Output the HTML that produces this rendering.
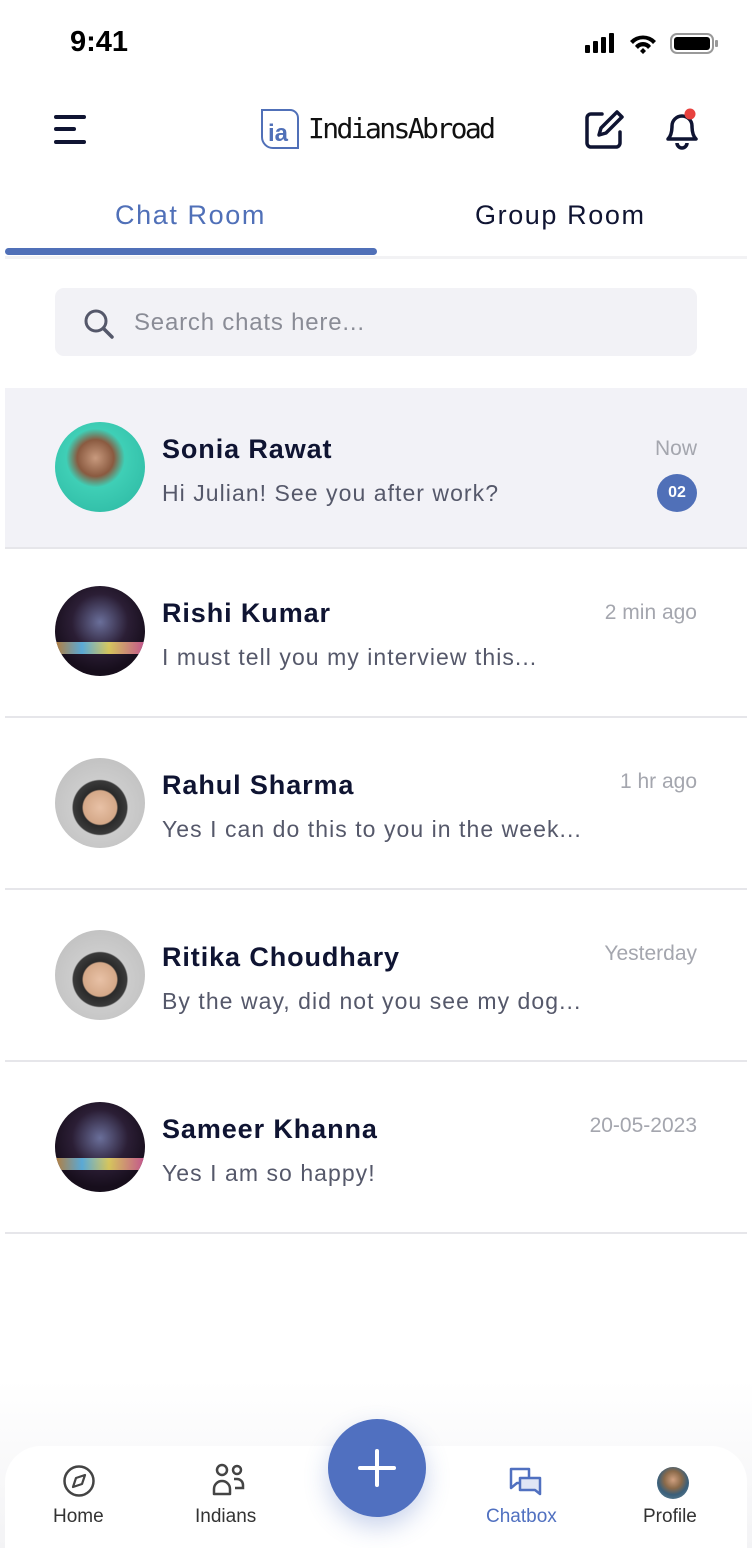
<!DOCTYPE html><html><head><meta charset="utf-8"><style>
*{margin:0;padding:0;box-sizing:border-box}
body{width:752px;height:1548px;background:#fff;font-family:"Liberation Sans",sans-serif;position:relative;overflow:hidden;color:#0f1432}
.a{position:absolute}
.row{position:absolute;left:5px;width:742px;border-bottom:2px solid #e6e6ea}
.av{position:absolute;left:50px;width:90px;height:90px;border-radius:50%;overflow:hidden}
.nm{position:absolute;left:157px;font-size:27px;font-weight:bold;color:#0f1432;letter-spacing:.9px}
.ms{position:absolute;left:157px;font-size:23px;color:#55586a;letter-spacing:1.05px}
.tm{position:absolute;right:50px;font-size:21px;color:#a4a6ae}
.city{background:radial-gradient(circle at 50% 40%,#6a6f9a 0,#2b1e35 40%,#170e1c 70%);}
.city:after{content:"";position:absolute;left:0;right:0;top:62%;height:14%;background:linear-gradient(90deg,#d94 0,#6cf 30%,#fe6 60%,#e6a 100%);opacity:.8}
.boy{background:radial-gradient(circle at 50% 55%,#e8c1a6 0,#d4a888 25%,#2a2a2a 27%,#3a3a3a 40%,#ccc 42%,#bbb 100%)}
.girl{background:radial-gradient(circle at 45% 40%,#c89a7e 0,#8a5a40 25%,#3fcfb6 40%,#2ab5a0 100%)}
</style></head><body>
<div class="a" style="left:70px;top:26px;font-size:29px;font-weight:bold;color:#000">9:41</div>
<svg class="a" style="left:585px;top:31px" width="135" height="26" viewBox="0 0 135 26"><rect x="0" y="14" width="5" height="8" rx="1"/><rect x="8" y="10" width="5" height="12" rx="1"/><rect x="16" y="6" width="5" height="16" rx="1"/><rect x="24" y="2" width="5" height="20" rx="1"/><path d="M45 10a18 18 0 0 1 26 0l-3 3a13 13 0 0 0-20 0zM50 15a10 10 0 0 1 16 0l-3 3a6 6 0 0 0-10 0zM55 20l3-3 3 3-3 3z"/><rect x="86" y="3" width="42" height="19" rx="6" fill="none" stroke="#000" stroke-width="2" opacity=".4"/><rect x="89" y="6" width="36" height="13" rx="3"/><rect x="130" y="9" width="3" height="7" rx="1" opacity=".4"/></svg>
<svg class="a" style="left:54px;top:114px" width="34" height="32"><g stroke="#0f1432" stroke-width="4" stroke-linecap="round"><line x1="2" y1="3" x2="30" y2="3"/><line x1="2" y1="15" x2="20" y2="15"/><line x1="2" y1="28" x2="30" y2="28"/></g></svg>
<svg class="a" style="left:259px;top:108px" width="42" height="42"><path d="M3 2h28a8 8 0 0 1 8 8v30H14A11 11 0 0 1 3 29z" fill="none" stroke="#5070b8" stroke-width="2"/><text x="9" y="33" font-size="24" font-weight="bold" fill="#5070b8" font-family="Liberation Sans">ia</text></svg>
<div class="a" style="left:308px;top:112px;font-size:28px;font-family:'DejaVu Sans Mono','Liberation Mono',monospace;letter-spacing:-2.6px;color:#111">IndiansAbroad</div>
<svg class="a" style="left:584px;top:108px" width="42" height="42"><path d="M18 6H7a4 4 0 0 0-4 4v25a4 4 0 0 0 4 4h25a4 4 0 0 0 4-4V24" fill="none" stroke="#0f1432" stroke-width="3.5" stroke-linecap="round"/><path d="M33 4l5 5-16 16-7 2 2-7z" fill="none" stroke="#0f1432" stroke-width="3.5" stroke-linejoin="round"/></svg>
<svg class="a" style="left:660px;top:106px" width="44" height="44"><path d="M8 33c3-3 4-7 4-13a10 10 0 0 1 20 0c0 6 1 10 4 13z" fill="none" stroke="#0f1432" stroke-width="3.5" stroke-linejoin="round"/><path d="M17 37a5 5 0 0 0 10 0" fill="none" stroke="#0f1432" stroke-width="3.5"/><circle cx="30" cy="8" r="5.5" fill="#e8423f"/></svg>
<div class="a" style="left:115px;top:200px;font-size:27px;color:#5070b8;letter-spacing:1.6px">Chat Room</div>
<div class="a" style="left:475px;top:200px;font-size:27px;color:#0f1432;letter-spacing:1.6px">Group Room</div>
<div class="a" style="left:5px;top:256px;width:742px;height:3px;background:#f2f2f4"></div>
<div class="a" style="left:5px;top:248px;width:372px;height:7px;border-radius:4px;background:#5070b8"></div>
<div class="a" style="left:55px;top:288px;width:642px;height:68px;border-radius:9px;background:#f2f2f6"></div>
<svg class="a" style="left:83px;top:308px" width="32" height="32"><circle cx="13" cy="13" r="10" fill="none" stroke="#55586a" stroke-width="3"/><line x1="21" y1="21" x2="29" y2="29" stroke="#55586a" stroke-width="3.5" stroke-linecap="round"/></svg>
<div class="a" style="left:134px;top:309px;font-size:24px;color:#8a8c96;letter-spacing:.8px">Search chats here...</div>

<div class="row" style="top:388px;height:161px;background:#f2f2f7"><div class="av girl" style="top:34px"></div><div class="nm" style="top:46px">Sonia Rawat</div><div class="ms" style="top:92px">Hi Julian! See you after work?</div><div class="tm" style="top:49px">Now</div><div class="a" style="left:652px;top:86px;width:40px;height:38px;border-radius:50%;background:#5070b8;color:#fff;font-size:16px;font-weight:bold;text-align:center;line-height:38px">02</div></div>
<div class="row" style="top:549px;height:169px"><div class="av city" style="top:37px"></div><div class="nm" style="top:49px">Rishi Kumar</div><div class="ms" style="top:95px">I must tell you my interview this...</div><div class="tm" style="top:52px">2 min ago</div></div>
<div class="row" style="top:718px;height:172px"><div class="av boy" style="top:40px"></div><div class="nm" style="top:52px">Rahul Sharma</div><div class="ms" style="top:98px">Yes I can do this to you in the week...</div><div class="tm" style="top:52px">1 hr ago</div></div>
<div class="row" style="top:890px;height:172px"><div class="av boy" style="top:40px"></div><div class="nm" style="top:52px">Ritika Choudhary</div><div class="ms" style="top:98px">By the way, did not you see my dog...</div><div class="tm" style="top:52px">Yesterday</div></div>
<div class="row" style="top:1062px;height:172px"><div class="av city" style="top:40px"></div><div class="nm" style="top:52px">Sameer Khanna</div><div class="ms" style="top:98px">Yes I am so happy!</div><div class="tm" style="top:52px">20-05-2023</div></div>

<div class="a" style="left:0;top:1380px;width:752px;height:168px;background:linear-gradient(#fff,#f3f3f5)"></div>
<div class="a" style="left:5px;top:1446px;width:742px;height:102px;border-radius:36px 36px 0 0;background:#fff"></div>
<div class="a" style="left:328px;top:1419px;width:98px;height:98px;border-radius:50%;background:#5070c0;box-shadow:0 10px 24px rgba(80,112,192,.3)"></div>
<svg class="a" style="left:357px;top:1448px" width="40" height="40"><g stroke="#fff" stroke-width="4" stroke-linecap="round"><line x1="20" y1="3" x2="20" y2="37"/><line x1="3" y1="20" x2="37" y2="20"/></g></svg>
<svg class="a" style="left:62px;top:1464px" width="34" height="34"><circle cx="17" cy="17" r="14.5" fill="none" stroke="#444" stroke-width="2.5"/><path d="M23 11l-3 9-9 3 3-9z" fill="none" stroke="#444" stroke-width="2.2" stroke-linejoin="round"/></svg>
<svg class="a" style="left:211px;top:1462px" width="36" height="36"><circle cx="11" cy="8" r="5" fill="none" stroke="#444" stroke-width="2.5"/><circle cx="26" cy="8" r="4" fill="none" stroke="#444" stroke-width="2.5"/><path d="M3 32v-5a8 8 0 0 1 16 0v5z" fill="none" stroke="#444" stroke-width="2.5" stroke-linejoin="round"/><path d="M23 17h3a6 6 0 0 1 6 6v3h-8" fill="none" stroke="#444" stroke-width="2.5"/></svg>
<svg class="a" style="left:508px;top:1466px" width="36" height="36"><path d="M3 3h18v14H9l-6 5z" fill="none" stroke="#5070c0" stroke-width="2.5" stroke-linejoin="round"/><path d="M12 12h20v16l-5-4H12z" fill="#dfe5f5" stroke="#5070c0" stroke-width="2.5" stroke-linejoin="round"/></svg>
<div class="a" style="left:657px;top:1467px;width:32px;height:32px;border-radius:50%;background:radial-gradient(circle at 50% 40%,#d0a080 0,#8a6a4a 35%,#3a5f7a 60%,#6a8a9a 100%)"></div>
<div class="a" style="left:53px;top:1506px;font-size:19px;color:#333">Home</div>
<div class="a" style="left:195px;top:1506px;font-size:19px;color:#333">Indians</div>
<div class="a" style="left:486px;top:1506px;font-size:19px;color:#5070c0">Chatbox</div>
<div class="a" style="left:643px;top:1506px;font-size:19px;color:#333">Profile</div>
</body></html>
